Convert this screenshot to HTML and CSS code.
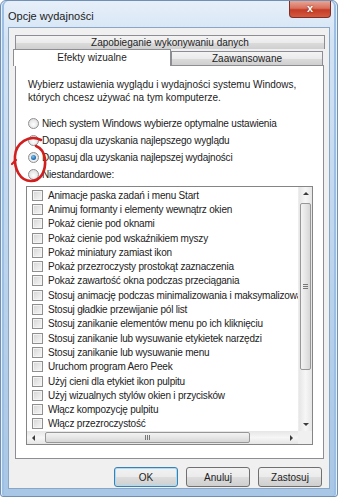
FILE: index.html
```html
<!DOCTYPE html>
<html lang="pl">
<head>
<meta charset="UTF-8">
<title>Opcje wydajności</title>
<link rel="stylesheet" href="styles.css">
</head>
<body>

<div class="window">
  <div class="titlebar">
    <span class="title">Opcje wydajności</span>
    <span class="close">x</span>
  </div>

  <div class="client">
    <div class="tab-row back">
      <div class="tab wide">Zapobieganie wykonywaniu danych</div>
    </div>
    <div class="tab-row front">
      <div class="tab selected">Efekty wizualne</div>
      <div class="tab other">Zaawansowane</div>
    </div>

    <div class="panel">
      <p class="desc">Wybierz ustawienia wyglądu i wydajności systemu Windows,<br>których chcesz używać na tym komputerze.</p>

      <div class="radios">
        <div class="radio-row"><span class="radio"></span>Niech system Windows wybierze optymalne ustawienia</div>
        <div class="radio-row"><span class="radio"></span>Dopasuj dla uzyskania najlepszego wyglądu</div>
        <div class="radio-row"><span class="radio checked"></span>Dopasuj dla uzyskania najlepszej wydajności</div>
        <div class="radio-row"><span class="radio"></span>Niestandardowe:</div>
      </div>

      <div class="listbox">
        <div class="items">
          <div class="item"><span class="check"></span>Animacje paska zadań i menu Start</div>
          <div class="item"><span class="check"></span>Animuj formanty i elementy wewnątrz okien</div>
          <div class="item"><span class="check"></span>Pokaż cienie pod oknami</div>
          <div class="item"><span class="check"></span>Pokaż cienie pod wskaźnikiem myszy</div>
          <div class="item"><span class="check"></span>Pokaż miniatury zamiast ikon</div>
          <div class="item"><span class="check"></span>Pokaż przezroczysty prostokąt zaznaczenia</div>
          <div class="item"><span class="check"></span>Pokaż zawartość okna podczas przeciągania</div>
          <div class="item"><span class="check"></span>Stosuj animację podczas minimalizowania i maksymalizowania okien</div>
          <div class="item"><span class="check"></span>Stosuj gładkie przewijanie pól list</div>
          <div class="item"><span class="check"></span>Stosuj zanikanie elementów menu po ich kliknięciu</div>
          <div class="item"><span class="check"></span>Stosuj zanikanie lub wysuwanie etykietek narzędzi</div>
          <div class="item"><span class="check"></span>Stosuj zanikanie lub wysuwanie menu</div>
          <div class="item"><span class="check"></span>Uruchom program Aero Peek</div>
          <div class="item"><span class="check"></span>Użyj cieni dla etykiet ikon pulpitu</div>
          <div class="item"><span class="check"></span>Użyj wizualnych stylów okien i przycisków</div>
          <div class="item"><span class="check"></span>Włącz kompozycję pulpitu</div>
          <div class="item"><span class="check"></span>Włącz przezroczystość</div>
        </div>

        <div class="vscroll">
          <span class="arrow up"></span>
          <span class="thumb-v"><span class="grip-v"></span></span>
          <span class="fill"></span>
          <span class="arrow down"></span>
        </div>

        <div class="hscroll">
          <span class="arrow left"></span>
          <span class="thumb-h"><span class="grip-h"></span></span>
          <span class="fill"></span>
          <span class="arrow right"></span>
        </div>
        <div class="corner"></div>
      </div>
    </div>

    <div class="buttons">
      <button class="btn default">OK</button>
      <button class="btn">Anuluj</button>
      <button class="btn">Zastosuj</button>
    </div>
  </div>

  <!-- hand drawn red mark over the third option -->
  <svg class="mark" width="44" height="56" viewBox="0 0 44 56">
    <path d="M33 9 C21 3 8 12 7 25 C6 38 12 50 23 50 C33 50 38 40 37 28 C36 21 33 17 28 15" fill="none" stroke="#d11f1f" stroke-width="2.6" stroke-linecap="round"/>
    <path d="M8 29 L4 33" fill="none" stroke="#d11f1f" stroke-width="2.2" stroke-linecap="round"/>
  </svg>
</div>

</body>
</html>
```

FILE: styles.css
```css
body {
  margin: 0;
  width: 338px;
  height: 500px;
  overflow: hidden;
  background: #ffffff;
  font-family: "Liberation Sans", Arial, sans-serif;
  font-size: 10px;
  color: #222;
}

.window {
  position: relative;
  height: 497px;
  box-sizing: border-box;
  padding: 0 7px 7px 7px;
  border: 1px solid #6f8fb3;
  border-radius: 6px 6px 3px 3px;
  background: linear-gradient(to bottom, #e6eff9 0%, #d3e3f4 40px, #b9d2ec 60%, #a8c6e6 100%);
  box-shadow: inset 1px 0 0 #e8f1fb, inset -1px 0 0 #e8f1fb, inset 3px 0 0 #9dbfe3, inset -3px 0 0 #9dbfe3;
}

.titlebar {
  height: 26px;
  display: flex;
  justify-content: space-between;
  align-items: flex-start;
}

.title {
  font-size: 11px;
  color: #1b1b1b;
  padding-top: 9px;
}

.close {
  width: 42px;
  height: 17px;
  margin-right: -1px;
  box-sizing: border-box;
  border: 1px solid #7b3028;
  border-top: none;
  border-radius: 0 0 4px 4px;
  background: linear-gradient(to bottom, #e9a595 0%, #d8705d 45%, #c53c26 55%, #d35a3f 100%);
  color: #fff;
  font-weight: bold;
  font-size: 11px;
  line-height: 15px;
  text-align: center;
  text-shadow: 0 0 2px #7b2010;
}

.client {
  height: 462px;
  box-sizing: border-box;
  border: 1px solid #8aa6c6;
  background: #f0f0f0;
  padding-top: 7px;
}

.tab-row {
  display: flex;
  align-items: flex-end;
}

.tab {
  box-sizing: border-box;
  border: 1px solid #8c8e94;
  border-bottom: none;
  background: linear-gradient(to bottom, #f4f4f4 0%, #ebebeb 50%, #dcdcdc 51%, #cfcfcf 100%);
  text-align: center;
  color: #1e1e1e;
}

.tab.wide {
  margin-left: 6px;
  width: 310px;
  height: 14px;
  line-height: 13px;
}

.tab-row.front {
  height: 16px;
}

.tab.selected {
  position: relative;
  z-index: 1;
  margin-left: 4px;
  width: 158px;
  height: 17px;
  margin-bottom: -1px;
  background: #fff;
  line-height: 15px;
}

.tab.other {
  width: 152px;
  height: 14px;
  line-height: 13px;
}

.panel {
  margin-left: 6px;
  width: 309px;
  height: 394px;
  box-sizing: border-box;
  border: 1px solid #8c8e94;
  background: #fff;
  padding: 12px 0 0 10px;
}

.desc {
  margin: 0 0 0 2px;
  line-height: 13px;
}

.radios {
  margin-top: 11px;
  padding-left: 2px;
}

.radio-row {
  height: 17px;
  display: flex;
  align-items: center;
  gap: 3px;
  letter-spacing: -0.2px;
}

.radio {
  width: 11px;
  height: 11px;
  box-sizing: border-box;
  border-radius: 50%;
  border: 1px solid #8f8f8f;
  background: radial-gradient(circle at 50% 60%, #ffffff 0%, #e2e2e2 70%, #cfcfcf 100%);
  display: flex;
  align-items: center;
  justify-content: center;
}

.radio.checked::after {
  content: "";
  width: 5px;
  height: 5px;
  border-radius: 50%;
  background: radial-gradient(circle at 40% 35%, #7fc4f0 0%, #1f6fb5 60%, #0f3f73 100%);
}

.listbox {
  margin-top: 3px;
  width: 287px;
  height: 259px;
  box-sizing: border-box;
  border: 1px solid #858585;
  display: grid;
  grid-template-columns: 1fr 14px;
  grid-template-rows: 1fr 13px;
}

.items {
  overflow: hidden;
  padding-top: 1px;
}

.item {
  height: 14.3px;
  display: flex;
  align-items: center;
  gap: 5px;
  padding-left: 5px;
  white-space: nowrap;
  letter-spacing: -0.2px;
}

.check {
  flex: none;
  width: 11px;
  height: 11px;
  box-sizing: border-box;
  border: 1px solid #8f8f8f;
  background: linear-gradient(135deg, #d4d4d4 0%, #eaeaea 60%, #f7f7f7 100%);
  box-shadow: inset 0 0 0 1px #f4f4f4;
}

.vscroll,
.hscroll {
  display: flex;
  background: linear-gradient(to right, #e6e6e6, #f6f6f6 50%, #e6e6e6);
}

.vscroll {
  flex-direction: column;
  border-left: 1px solid #ededed;
}

.hscroll {
  background: linear-gradient(to bottom, #e6e6e6, #f6f6f6 50%, #e6e6e6);
}

.corner {
  background: #f0f0f0;
}

.fill {
  flex: 1;
}

.arrow {
  flex: none;
  width: 13px;
  height: 13px;
  display: flex;
  align-items: center;
  justify-content: center;
}

.arrow::after {
  content: "";
  border: 3px solid transparent;
}

.arrow.up::after { border-bottom-color: #3c3c3c; border-top-width: 0; }
.arrow.down::after { border-top-color: #3c3c3c; border-bottom-width: 0; }
.arrow.left::after { border-right-color: #3c3c3c; border-left-width: 0; }
.arrow.right::after { border-left-color: #3c3c3c; border-right-width: 0; }

.thumb-v {
  margin: 3px 0 0 1px;
  width: 11px;
  height: 167px;
  box-sizing: border-box;
  border: 1px solid #979797;
  border-radius: 2px;
  background: linear-gradient(to right, #f3f3f3, #e6e6e6 50%, #d6d6d6);
  display: flex;
  align-items: center;
  justify-content: center;
}

.grip-v {
  width: 5px;
  height: 5px;
  background: repeating-linear-gradient(to bottom, #777 0 1px, transparent 1px 2px);
}

.thumb-h {
  margin: 1px 0 0 5px;
  width: 205px;
  height: 11px;
  box-sizing: border-box;
  border: 1px solid #979797;
  border-radius: 2px;
  background: linear-gradient(to bottom, #f3f3f3, #e6e6e6 50%, #d6d6d6);
  display: flex;
  align-items: center;
  justify-content: center;
}

.grip-h {
  width: 5px;
  height: 5px;
  background: repeating-linear-gradient(to right, #777 0 1px, transparent 1px 2px);
}

.buttons {
  display: flex;
  justify-content: flex-end;
  gap: 8px;
  padding: 8px 7px 0 0;
}

.btn {
  width: 64px;
  height: 20px;
  padding: 0;
  border: 1px solid #707070;
  border-radius: 3px;
  background: linear-gradient(to bottom, #f2f2f2 0%, #ebebeb 50%, #dddddd 51%, #cfcfcf 100%);
  font-family: "Liberation Sans", Arial, sans-serif;
  font-size: 10px;
  color: #1e1e1e;
}

.btn.default {
  border-color: #3c7fb1;
  box-shadow: inset 0 0 0 1px #a9dcf5;
}

.mark {
  position: absolute;
  left: 7px;
  top: 130px;
}
```
